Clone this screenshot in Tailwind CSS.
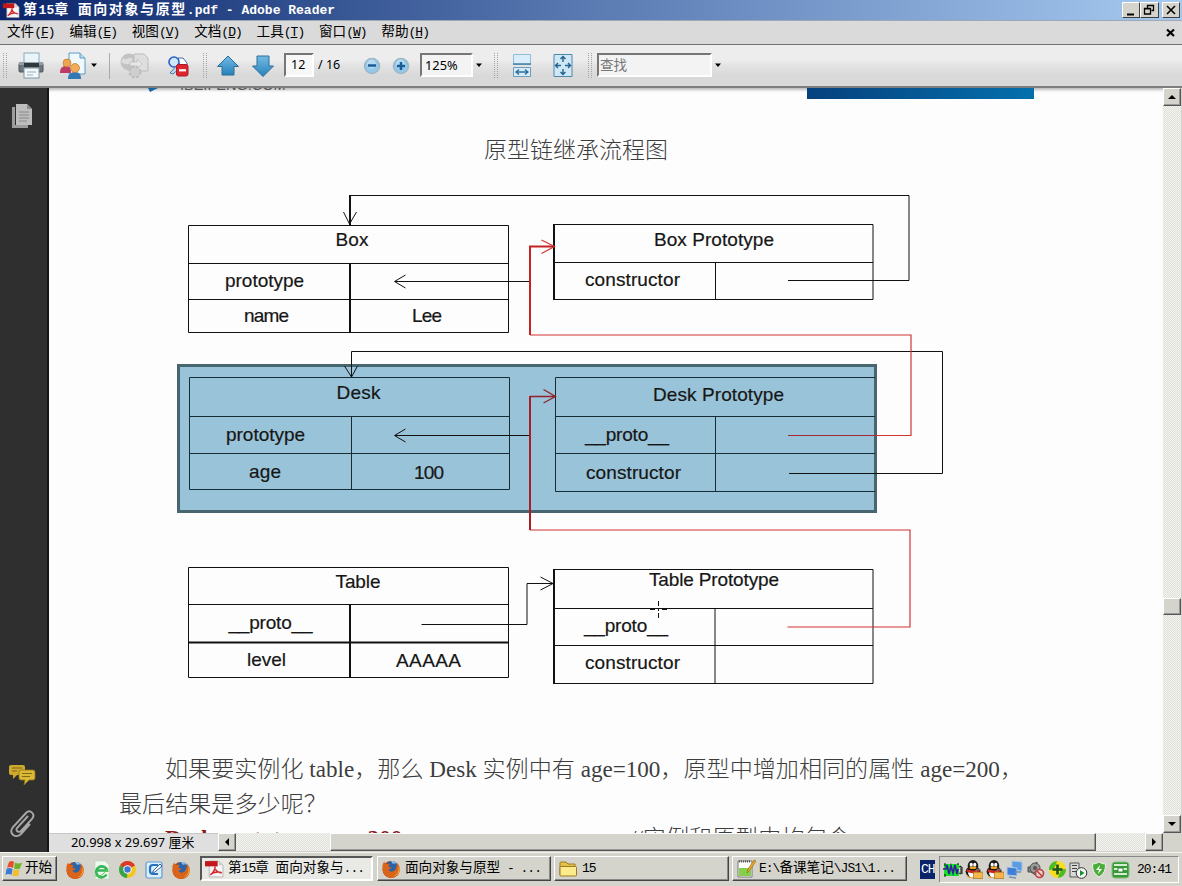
<!DOCTYPE html>
<html lang="zh-CN">
<head>
<meta charset="utf-8">
<title>第15章 面向对象与原型.pdf - Adobe Reader</title>
<script src="https://cdn.jsdelivr.net/npm/@tailwindcss/browser@4"></script>
</head>
<body class="w-[1182px] h-[886px] overflow-hidden flex flex-col bg-[#d4d4cc] font-['Liberation_Mono','Noto_Sans_CJK_SC',monospace] text-black">

<!-- shared symbols and patterns -->
<svg class="absolute w-0 h-0">
  <symbol id="pdf" viewBox="0 0 18 17"><path d="M4 1h9l4 4v11H4z" fill="#f6f6f6" stroke="#999" stroke-width=".6"/><path d="M13 1l4 4h-4z" fill="#ccc"/><path d="M0 1h12v5H0z" fill="#c3171c"/><path d="M5 14c3-2 5-6 4.500-8M9 7c1 3 3 5 7 5M6 13c3-2 6-2 9-1.500" fill="none" stroke="#d3262b" stroke-width="1.400"/></symbol>
  <symbol id="ff" viewBox="0 0 20 20"><circle cx="10" cy="10.500" r="8.500" fill="#b8400c"/><circle cx="11" cy="8" r="6" fill="#2a63a8"/><path d="M10 2c3-.5 5 1 6 3-2-1-3-1-4 0z" fill="#8cc4ee"/><path d="M1.500 9C1 6 2 4 3.500 2.500c0 1.500.5 2 1.500 2.500 1.500-.4 3 0 4 1-1 .2-1.500 1-1.500 2 1 .4 2 .5 3 .3-.5 2-2 2-3 2.200 1 2.500 4 3 6.500.5C16 8 16 6 15.500 3.500 18.500 6 19.500 9 18.500 13c-1 3.500-4.500 6-8.500 6S1.500 15 1.500 9z" fill="#d9641a"/><path d="M17 6c1.500 4 .5 9-4 11 3.500-.5 6-4 5.500-7.500z" fill="#fbb437"/></symbol>
  <symbol id="qq" viewBox="0 0 18 18"><path d="M3 15c0 3 4 2 6 2s5 1 5-2z" fill="#f5a21c"/><ellipse cx="8.500" cy="11" rx="7" ry="5.500" fill="#1b1b1b"/><ellipse cx="8" cy="12.500" rx="4" ry="4" fill="#fff"/><ellipse cx="8.500" cy="5.500" rx="5" ry="5.500" fill="#1b1b1b"/><ellipse cx="6.800" cy="4.500" rx="1.500" ry="1.900" fill="#fff"/><ellipse cx="10.200" cy="4.500" rx="1.500" ry="1.900" fill="#fff"/><ellipse cx="8.500" cy="7.300" rx="3.300" ry="1.200" fill="#f5a21c"/><path d="M2.500 8.500q6 3 12 0v2.500q-6 3-12 0z" fill="#d3281c"/><path d="M11.500 12v-1.500a2 2 0 0 1 4 0V12" fill="none" stroke="#777" stroke-width="1"/><rect x="9" y="11.500" width="9" height="6" fill="#f7b64c" stroke="#a06a14" stroke-width=".6"/></symbol>
  <pattern id="dither" width="2" height="2" patternUnits="userSpaceOnUse"><rect width="2" height="2" fill="#f4f4f1"/><rect width="1" height="1" fill="#dfdfda"/><rect x="1" y="1" width="1" height="1" fill="#dfdfda"/></pattern>
</svg>

<!-- title bar -->
<header class="h-[21px] shrink-0 flex items-center bg-linear-to-r from-[#0b246a] via-[#5777b0] via-48% to-[#a6caf0] border-b border-[#9fa8b5]">
  <svg class="w-[17px] h-[17px] ml-[3px] mr-[3px]"><use href="#pdf"/></svg>
  <h1 class="text-white font-bold text-[13px] leading-[20px] whitespace-pre grow"><span class="text-[14px] tracking-[1.600px]">第</span>15<span class="text-[14px] tracking-[1.600px]">章</span> <span class="text-[14px] tracking-[1.600px]">面向对象与原型</span>.pdf - Adobe Reader</h1>
  <div class="flex mr-[2px]">
    <div class="w-[18px] h-[16px] bg-[#d4d4cc] border border-t-white border-l-white border-r-[#404040] border-b-[#404040]"><svg class="w-4 h-3.5"><path d="M4 10.500h7v2H4z"/></svg></div>
    <div class="w-[19px] h-[16px] bg-[#d4d4cc] border border-t-white border-l-white border-r-[#404040] border-b-[#404040]"><svg class="w-4 h-3.5"><path d="M6.500 5V2.500h6v5h-2M3.500 5.500h6v5.500h-6z M6 2.500h7M3 5.800h7" fill="none" stroke="#000" stroke-width="1.300"/></svg></div>
    <div class="ml-[3px] w-[18px] h-[16px] bg-[#d4d4cc] border border-t-white border-l-white border-r-[#404040] border-b-[#404040]"><svg class="w-4 h-3.5"><path d="M4 3l8 8M12 3l-8 8" stroke="#000" stroke-width="1.600"/></svg></div>
  </div>
</header>

<!-- menu bar -->
<nav class="h-[24px] shrink-0 flex items-center bg-[#dadada] border-b border-[#737373] pl-[7px] text-[13px] tracking-[-1px] leading-[22px] whitespace-pre">
  <span class="w-[62.400px]"><span class="text-[13.600px] tracking-[0px]">文件</span>(<u>F</u>)</span>
  <span class="w-[62.400px]"><span class="text-[13.600px] tracking-[0px]">编辑</span>(<u>E</u>)</span>
  <span class="w-[62.400px]"><span class="text-[13.600px] tracking-[0px]">视图</span>(<u>V</u>)</span>
  <span class="w-[62.400px]"><span class="text-[13.600px] tracking-[0px]">文档</span>(<u>D</u>)</span>
  <span class="w-[62.400px]"><span class="text-[13.600px] tracking-[0px]">工具</span>(<u>T</u>)</span>
  <span class="w-[62.400px]"><span class="text-[13.600px] tracking-[0px]">窗口</span>(<u>W</u>)</span>
  <span class="grow"><span class="text-[13.600px] tracking-[0px]">帮助</span>(<u>H</u>)</span>
  <svg class="w-[9px] h-[9px] mr-[7px]"><path d="M1 1.500l7 6.500M8 1.500l-7 6.500" stroke="#000" stroke-width="2.200"/></svg>
</nav>

<!-- toolbar -->
<div class="h-[43px] shrink-0 bg-linear-to-b from-[#ededed] from-36% via-[#e3e3e3] via-50% to-[#d9d9d9] to-75% border-b-2 border-[#7d7d7d] flex items-center pl-[3px] font-['Noto_Sans','Noto_Sans_CJK_SC',sans-serif]">
  <div class="w-[4px] h-[25px] border-x border-dotted border-[#a5a5a5]"></div>
  <svg class="w-[28px] h-[28px] ml-[10px]" viewBox="0 0 28 28"><rect x="7" y="1" width="15" height="11" fill="#eaf5fa" stroke="#8caab9"/><rect x="2" y="11" width="24" height="9" rx="1" fill="#6d777b" stroke="#4b5458"/><path d="M7 11h15v4H7z" fill="#30383c"/><path d="M2 10h5v3H2zM22 10h4v3h-4z" fill="#93a0a5"/><rect x="7" y="16" width="15" height="10" fill="#f2f9fc" stroke="#7d97a4"/><path d="M10 20h9M10 23h6" stroke="#99aab3"/></svg>
  <svg class="w-[28px] h-[28px] ml-[14px]" viewBox="0 0 28 28"><path d="M10 1h11l5 5v16H10z" fill="#eef8fd" stroke="#5c9cc6"/><path d="M21 1v5h5" fill="#b9dbee" stroke="#5c9cc6"/><path d="M1 21c0-5 2-7 6-7s5 2 5 7z" fill="#bd3b66"/><circle cx="8" cy="11" r="4" fill="#eda453" stroke="#c17a2d" stroke-width=".7"/><path d="M9 27c0-5 3-7 7-7s6 2 6 7z" fill="#3278b2"/><circle cx="16" cy="16" r="4.500" fill="#f0ac5c" stroke="#c17a2d" stroke-width=".7"/></svg>
  <svg class="w-[8px] h-[5px] ml-[3px]"><path d="M1 .5h6L4 4z"/></svg>
  <div class="w-px h-[26px] bg-[#aaa] ml-[11px]"></div>
  <svg class="w-[31px] h-[28px] ml-[10px]" viewBox="0 0 31 28"><circle cx="9" cy="10" r="8.500" fill="#c2c2c2"/><path d="M3 6c4 3 5-1 8 0s1 5-2 6-6-1-8-2z" fill="#ddd"/><path d="M14 2h10l4 4v13H14z" fill="#dedede" stroke="#bcbcbc"/><path d="M10 10h7V7l5 5-5 5v-3h-7z" fill="#e6e6e6" stroke="#b5b5b5" stroke-width=".6"/><circle cx="15" cy="20" r="5" fill="#c9c9c9" stroke="#bcbcbc" stroke-width="3" stroke-dasharray="2.500 1.500"/><circle cx="15" cy="20" r="4.500" fill="#cfcfcf"/></svg>
  <svg class="w-[22px] h-[22px] ml-[16px]" viewBox="0 0 22 22"><path d="M11 3h5l4 5v9h-8z" fill="#fff" stroke="#446fa8"/><circle cx="7" cy="7" r="5" fill="#cfe6fb" stroke="#285fc1" stroke-width="1.600"/><path d="M3 18l9-10 3 3-9 8z" fill="#b9d7ee" stroke="#31629e" stroke-width=".8"/><rect x="9.500" y="9.500" width="11.500" height="11.500" rx="2" fill="#dc2630" stroke="#b31620"/><path d="M12 15.300h7" stroke="#fff" stroke-width="2.200"/></svg>
  <div class="w-[4px] h-[25px] border-x border-dotted border-[#a5a5a5] ml-[14px]"></div>
  <svg class="w-[24px] h-[24px] ml-[9px]" viewBox="0 0 24 24"><defs><linearGradient id="ab" x2="0" y2="1"><stop stop-color="#74bbe6"/><stop offset="1" stop-color="#2581b9"/></linearGradient></defs><path d="M12 2L1.500 12.500H6V21h12v-8.500h4.500z" fill="url(#ab)" stroke="#2c6c98"/></svg>
  <svg class="w-[24px] h-[24px] ml-[11px]" viewBox="0 0 24 24"><path d="M12 22.500L1.500 12H6V2h12v10h4.500z" fill="url(#ab)" stroke="#2c6c98"/></svg>
  <div class="w-[30px] h-[24px] ml-[9px] bg-[#f7f7f7] border-2 border-t-[#767676] border-l-[#767676] border-r-white border-b-white text-[12.500px] leading-[20px] pl-[5px] -mt-px">12</div>
  <span class="text-[12.500px] ml-[4px] whitespace-pre w-[33px]">/ 16</span>
  <svg class="w-[18px] h-[18px] ml-[12px]" viewBox="0 0 18 18"><circle cx="9" cy="9" r="7.500" fill="#94c9e9" stroke="#9fb7c6" stroke-width="1.500"/><circle cx="8.500" cy="7" r="4.500" fill="#b3dbf2"/><path d="M5 8.500h8" stroke="#1a5c96" stroke-width="2.500"/></svg>
  <svg class="w-[18px] h-[18px] ml-[11px]" viewBox="0 0 18 18"><circle cx="9" cy="9" r="7.500" fill="#94c9e9" stroke="#9fb7c6" stroke-width="1.500"/><circle cx="8.500" cy="7" r="4.500" fill="#b3dbf2"/><path d="M5 9h8M9 5v8" stroke="#1a5c96" stroke-width="2.500"/></svg>
  <div class="w-[53px] h-[24px] ml-[10px] bg-[#f3f3f3] border-2 border-t-[#767676] border-l-[#767676] border-r-white border-b-white text-[12.800px] leading-[20px] pl-[3px] -mt-px">125%</div>
  <svg class="w-[8px] h-[5px] ml-[2px]"><path d="M1 .5h6L4 4z"/></svg>
  <div class="w-[4px] h-[25px] border-x border-dotted border-[#a5a5a5] ml-[11px]"></div>
  <svg class="w-[20px] h-[25px] ml-[14px]" viewBox="0 0 20 25"><path d="M1.500 1.500h17v10h-17z" fill="#d9eefa" stroke="#8ebdd8"/><path d="M1 11h18" stroke="#3f7fa5" stroke-width="1.500"/><path d="M1.500 14.500h17v9h-17z" fill="#d5ebf7" stroke="#6d9dbb"/><path d="M4 19h12M7 16.500L4 19l3 2.500M13 16.500l3 2.500-3 2.500" fill="none" stroke="#2c6e9c" stroke-width="1.300"/></svg>
  <svg class="w-[20px] h-[25px] ml-[21px]" viewBox="0 0 20 25"><path d="M1 1.500h18v22H1z" fill="#cfe8f6" stroke="#4e87ac"/><path d="M10 3.500V9M7.500 6L10 3.500 12.500 6M10 21.500V16M7.500 19l2.500 2.500 2.500-2.500M2.500 12.500H8M5 10l-2.500 2.500L5 15M17.500 12.500H12M15 10l2.500 2.500L15 15" fill="none" stroke="#22638f" stroke-width="1.400"/></svg>
  <div class="w-[4px] h-[25px] border-x border-dotted border-[#a5a5a5] ml-[15px]"></div>
  <div class="w-[115px] h-[24px] ml-[5px] bg-[#f3f3f3] border-2 border-t-[#767676] border-l-[#767676] border-r-white border-b-white text-[13.600px] leading-[20px] pl-[1px] text-[#777] -mt-px">查找</div>
  <svg class="w-[8px] h-[5px] ml-[2px]"><path d="M1 .5h6L4 4z"/></svg>
</div>

<!-- work area -->
<main class="h-[764px] shrink-0 flex">
  <aside class="w-[49px] shrink-0 bg-[#2f2f2f] border-r-2 border-r-[#161616] flex flex-col items-center pr-[3px]">
    <svg class="w-[22px] h-[26px] mt-[15px]" viewBox="0 0 22 26"><path d="M1 4h3v18h13v3H1z" fill="#9c9c9c"/><path d="M5 1h11l5 5v16H5z" fill="#bdbdbd"/><path d="M16 1v5h5" fill="#8c8c8c"/><path d="M8 9h10M8 12h10M8 15h10M8 18h8" stroke="#8a8a8a"/></svg>
    <div class="grow"></div>
    <svg class="w-[28px] h-[22px]" viewBox="0 0 28 22"><path d="M3 1h12q2 0 2 2v6q0 2-2 2H9l-4 4v-4H3q-2 0-2-2V3q0-2 2-2z" fill="#cdaa2b"/><path d="M13 6h12q2 0 2 2v6q0 2-2 2h-4l-5 5 1-5h-4q-2 0-2-2V8q0-2 2-2z" fill="#dcb935" stroke="#8d741b" stroke-width=".8"/><path d="M4 4h10M4 7h5M14 9.500h10M14 12.500h8" stroke="#7f6817" stroke-width="1.200"/></svg>
    <svg class="w-[26px] h-[28px] mt-[24px] mb-[14px]" viewBox="0 0 26 28"><path d="M19 6L8 18c-2 3 2 5 4 3L23 9c4-5-2-10-6-6L4 17c-5 7 3 12 8 7l9-10" fill="none" stroke="#a9a9a9" stroke-width="1.900"/></svg>
  </aside>

  <section class="w-[1114px] shrink-0 flex flex-col">
    <!-- page -->
    <article class="h-[745px] shrink-0 overflow-hidden bg-[#fdfdfd] flex flex-col text-[#3d3d3d] font-['Liberation_Serif','Noto_Sans_CJK_SC',serif] shadow-[inset_0_4px_3px_-2px_#bbb]">
      <div class="h-[11px] shrink-0 flex items-start pl-[99px] overflow-hidden">
        <svg class="w-[11px] h-[5px] shrink-0"><path d="M0 0h10L2 4z" fill="#1866a0"/></svg>
        <div class="w-[648px] h-[5px] shrink-0 pl-[21px] overflow-hidden"><p class="-mt-[11px] text-[14.500px] leading-[16px] font-['Liberation_Sans',sans-serif] text-[#555]">IBEIFENG.COM</p></div>
        <div class="w-[227px] h-[11px] bg-linear-to-r from-[#06417d] to-[#0470ad]"></div>
      </div>
      <h2 class="mt-[34px] h-[36px] shrink-0 pl-[435px] text-[23px] leading-[36px] font-light">原型链继承流程图</h2>
      <svg class="mt-[11px] w-[1114px] h-[520px] shrink-0" viewBox="49 180 1114 520" font-family="Liberation Sans, sans-serif" font-size="19" fill="none" stroke="#111">
        <!-- highlighted Desk group -->
        <rect x="178.500" y="365.500" width="697" height="146" fill="#99c3d8" stroke="#48666f" stroke-width="3"/>
        <!-- Box -->
        <path d="M188.500 225.500h320v107h-320zM188.500 263.500h320M188.500 299.500h320"/><path d="M350 263v70" stroke-width="2"/>
        <path d="M554.500 224.500h318.500v75H554.500zM554 262.500h319M715.500 262.500v37"/><path d="M554 224v76" stroke-width="2"/>
        <path d="M350.500 195.500h558.500v85h-121"/><path d="M350 195v30" stroke-width="2"/><path d="M343.500 212l6 12 7-12"/>
        <path d="M530 281.500H395M405.500 275l-11 6.500 11 6.500"/>
        <!-- Desk -->
        <path d="M189.500 377.500h320v112h-320zM189.500 416.500h320M189.500 453.500h320M351.500 416.500v73M875 377.500H555.500v114H875M555.500 416.500H875M555.500 453.500H875M715.500 416.500v75" stroke="#152c35"/>
        <path d="M351.500 377v-25.500h591v122H789M344.500 366l7 11 6-11"/>
        <path d="M530 435.500H395M405.500 429l-11 6.500 11 6.500"/>
        <!-- Table -->
        <path d="M188.500 567.500h320v110h-320zM188.500 604.500h320"/><path d="M188 642.500h321M350 604v74" stroke-width="2"/>
        <path d="M554.500 569.500h318.500v114H554.500zM554 608.500h319M554 645.500h319M715 608.500v75"/><path d="M554 569v115" stroke-width="2"/>
        <path d="M421.500 624.500h105.500v-41h26M540.500 577l12.500 6.500-12.500 6.500"/>
        <!-- inheritance links -->
        <g stroke="#cf3535" stroke-width="1.200"><path d="M530 335h381v100.500H875M530 530h380v97H787.500"/><path d="M541.500 240l13 6.500-13 7"/><path d="M876 435.500H788" stroke="#a52a35"/></g>
        <path d="M530 335v-88.500h23.500" stroke="#c52222" stroke-width="2"/>
        <path d="M530 530V396" stroke="#a91d24" stroke-width="2"/><path d="M530 396.500h25M543.500 389.500l12 7-12 6.500" stroke="#94222b" stroke-width="1.300"/>
        <!-- mouse cursor -->
        <path d="M658.500 601v5M658.500 608v3M658.500 613v5M650 609.500h5M662 609.500h5"/>
        <g fill="#161616" stroke="#161616" stroke-width=".2">
          <text x="335.500" y="246" textLength="33">Box</text><text x="225" y="287" textLength="79">prototype</text><text x="244" y="322" textLength="45">name</text><text x="412" y="322" textLength="30">Lee</text>
          <text x="654" y="246" textLength="120">Box Prototype</text><text x="585" y="286" textLength="95">constructor</text>
          <text x="336.500" y="399" textLength="44">Desk</text><text x="226" y="441" textLength="79">prototype</text><text x="249" y="478" textLength="32">age</text><text x="414" y="479" textLength="30">100</text>
          <text x="653" y="401" textLength="131">Desk Prototype</text><text x="585" y="441" textLength="84">__proto__</text><text x="586" y="479" textLength="95">constructor</text>
          <text x="335.500" y="588" textLength="45">Table</text><text x="228.500" y="629" textLength="84">__proto__</text><text x="247" y="666" textLength="39">level</text><text x="396" y="667" textLength="65">AAAAA</text>
          <text x="649" y="586" textLength="130">Table Prototype</text><text x="584" y="632" textLength="84">__proto__</text><text x="585" y="669" textLength="95">constructor</text>
        </g>
      </svg>
      <div class="mt-[52px] pl-[70px] shrink-0 text-[23.100px] leading-[34.500px] whitespace-nowrap font-light">
        <p class="h-[34.500px] pl-[46px]">如果要实例化 table，那么 Desk 实例中有 age=100，原型中增加相同的属性 age=200，</p>
        <p class="h-[34.500px]">最后结果是多少呢？</p>
        <p class="h-[34.500px] pl-[46px] flex"><span class="w-[465px] font-bold text-[#8b1a1a]">Desk.prototype.age=200;</span><span>//实例和原型中均包含</span></p>
      </div>
    </article>
    <!-- horizontal scroll bar -->
    <div class="h-[19px] shrink-0 flex bg-[#d4d4cc]">
      <div class="w-[169px] bg-[#dfdfdf] border-t border-[#c8c8c8] pl-[22px] text-[12.900px] leading-[17px] font-['Noto_Sans','Noto_Sans_CJK_SC',sans-serif] whitespace-nowrap">20.998 x 29.697 厘米</div>
      <div class="w-[18px] h-[18px] border border-t-white border-l-white border-r-[#555] border-b-[#555] shadow-[inset_-1px_-1px_#999]"><svg class="w-4 h-4"><path d="M10 4v8L6 8z"/></svg></div>
      <svg class="w-[94px] h-[18px]"><rect width="94" height="18" fill="url(#dither)"/></svg>
      <div class="w-[766px] h-[18px] border border-t-white border-l-white border-r-[#555] border-b-[#555] shadow-[inset_-1px_-1px_#999]"></div>
      <svg class="w-[49px] h-[18px]"><rect width="49" height="18" fill="url(#dither)"/></svg>
      <div class="w-[18px] h-[18px] border border-t-white border-l-white border-r-[#555] border-b-[#555] shadow-[inset_-1px_-1px_#999]"><svg class="w-4 h-4"><path d="M6 4v8l4-4z"/></svg></div>
    </div>
  </section>

  <!-- vertical scroll bar -->
  <div class="w-[19px] flex flex-col pr-px bg-[#d4d4cc]">
    <div class="h-[18px] border border-t-white border-l-white border-r-[#555] border-b-[#555] shadow-[inset_-1px_-1px_#999]"><svg class="w-4 h-4"><path d="M4 10h8L8 6z"/></svg></div>
    <svg class="w-[18px] h-[492px]"><rect width="18" height="492" fill="url(#dither)"/></svg>
    <div class="h-[17px] border border-t-white border-l-white border-r-[#555] border-b-[#555] shadow-[inset_-1px_-1px_#999]"></div>
    <svg class="w-[18px] h-[200px]"><rect width="18" height="200" fill="url(#dither)"/></svg>
    <div class="h-[18px] border border-t-white border-l-white border-r-[#555] border-b-[#555] shadow-[inset_-1px_-1px_#999]"><svg class="w-4 h-4"><path d="M4 6h8l-4 4z"/></svg></div>
  </div>
</main>

<!-- taskbar -->
<footer class="h-[34px] shrink-0 flex items-start pt-[3px] pl-[2px] border-t border-[#f4f4f0] bg-[#d4d4cc] text-[13px] tracking-[-1px] leading-[20px] whitespace-pre">
  <div class="w-[55px] h-[25px] flex items-center border border-t-white border-l-white border-r-[#444] border-b-[#444] shadow-[inset_-1px_-1px_#888]">
    <svg class="w-[18px] h-[17px] ml-[2px]" viewBox="0 0 18 17"><path d="M4 2q3-2 5 0L8 8q-3-2-6 0z" fill="#e5502a"/><path d="M10 2.500q3 2 7 0l-2 6q-3 1.500-6 0z" fill="#73b32c"/><path d="M1.500 9q3-2 6 0l-1 6q-3-2-6 0z" fill="#3a7bd5"/><path d="M8.500 9.500q3 1.500 6 0l-1 6q-3 1.500-6 0z" fill="#f5bd2b"/></svg>
    <span class="text-[13.600px] tracking-[0px] ml-[2px]">开始</span>
  </div>
  <div class="flex items-center h-[27px] pl-[8px] gap-[7px]">
    <svg class="w-[20px] h-[20px]"><use href="#ff"/></svg>
    <svg class="w-[19px] h-[20px]" viewBox="0 0 19 20"><path d="M3 1h10l4 4v14H3z" fill="#eff8ef" stroke="#b9d4b9" stroke-width=".6"/><path d="M14.500 14.500a5.500 5.500 0 1 1 .5-4H5" fill="none" stroke="#35b657" stroke-width="2.600"/><path d="M3 16q7 2 13-8" stroke="#57cb4a" fill="none"/></svg>
    <svg class="w-[19px] h-[19px]" viewBox="0 0 19 19"><circle cx="9.500" cy="9.500" r="8.500" fill="#f4c61c"/><path d="M9.500 9.500L2 5.500A8.500 8.500 0 0 1 17 5.500z" fill="#d93a2b"/><path d="M9.500 9.500L2 5.500A8.500 8.500 0 0 0 9 18z" fill="#36a34b"/><circle cx="9.500" cy="9.500" r="4.200" fill="#fff"/><circle cx="9.500" cy="9.500" r="3.200" fill="#3c79d3"/></svg>
    <svg class="w-[20px] h-[20px]" viewBox="0 0 20 20"><rect x="2" y="2" width="16" height="16" rx="2" fill="#dceefc" stroke="#5f9bd0" stroke-width="1.200"/><path d="M14 5H9q-3 0-3 3v3q0 3 3 3h5" fill="none" stroke="#2773bd" stroke-width="2.200"/><path d="M9 11l7-7 2 2-7 6-2.500.5z" fill="#fff" stroke="#2c629b"/></svg>
    <svg class="w-[20px] h-[20px]"><use href="#ff"/></svg>
  </div>
  <div class="ml-[9px] w-[173px] h-[25px] flex items-center bg-[#e9e9e5] border-2 border-t-[#555] border-l-[#555] border-r-white border-b-white">
    <svg class="w-[19px] h-[18px] ml-[3px] mr-[4px]"><use href="#pdf"/></svg><span><span class="text-[13.600px] tracking-[0px]">第</span>15<span class="text-[13.600px] tracking-[0px]">章</span> <span class="text-[13.600px] tracking-[0px]">面向对象与</span>...</span>
  </div>
  <div class="ml-[4px] w-[174px] h-[25px] flex items-center border border-t-white border-l-white border-r-[#444] border-b-[#444] shadow-[inset_-1px_-1px_#888]">
    <svg class="w-[20px] h-[20px] ml-[3px] mr-[4px]"><use href="#ff"/></svg><span><span class="text-[13.600px] tracking-[0px]">面向对象与原型</span> - ...</span>
  </div>
  <div class="ml-[3px] w-[175px] h-[25px] flex items-center border border-t-white border-l-white border-r-[#444] border-b-[#444] shadow-[inset_-1px_-1px_#888]">
    <svg class="w-[19px] h-[16px] ml-[4px] mr-[4px]" viewBox="0 0 19 16"><path d="M1 14V2q0-1 1-1h5l2 2h7v4" fill="#e4c24a" stroke="#9b7b1c"/><path d="M1 14V6.500q0-1 1-1h14.500q1 0 1 1V14q0 1-1 1H2q-1 0-1-1z" fill="#fdeb8e" stroke="#9b7b1c"/></svg><span>15</span>
  </div>
  <div class="ml-[3px] w-[175px] h-[25px] flex items-center border border-t-white border-l-white border-r-[#444] border-b-[#444] shadow-[inset_-1px_-1px_#888]">
    <svg class="w-[20px] h-[19px] ml-[3px] mr-[3px]" viewBox="0 0 20 19"><path d="M2 2h14v16H2z" fill="#fff" stroke="#777"/><path d="M3 9h12v8H3z" fill="#84d04a"/><path d="M3 2.500h12" stroke="#555" stroke-width="2" stroke-dasharray="1 1"/><path d="M11 14l1-4 6-9 2 1-6 9z" fill="#ecab25" stroke="#8d5e12" stroke-width=".6"/></svg><span>E:\<span class="text-[13.600px] tracking-[0px]">备课笔记</span>\JS1\1...</span>
  </div>
  <div class="ml-[13px] mt-[4px] w-[15px] h-[19px] bg-[#0a246a] text-white leading-[19px] overflow-hidden pl-px">CH</div>
  <div class="ml-[4px] w-[240px] h-[27px] flex items-center border border-t-[#888] border-l-[#888] border-r-white border-b-white pl-[3px]">
    <svg class="w-[20px] h-[14px]" viewBox="0 0 20 14"><path d="M1 1h15v12H1z" fill="#18df28"/><path d="M0 6h3l1-4 2 9 2-8 2 7 2-8 2 9 1-5" fill="none" stroke="#30209a" stroke-width="1.700"/><path d="M2 0v3M2 11v3M14 1h2M16 4l2-1v8l-2-1M19 4v7" stroke="#111" fill="none"/></svg>
    <svg class="w-[19px] h-[19px] ml-px"><use href="#qq"/></svg>
    <svg class="w-[19px] h-[19px] ml-[2px]"><use href="#qq"/></svg>
    <svg class="w-[18px] h-[19px] ml-[2px]" viewBox="0 0 18 19"><path d="M6 1l10 1v9l-10-1z" fill="#5b9be4" stroke="#aac4e0"/><path d="M1 7l10 1v8L1 15z" fill="#3c7fda" stroke="#b7cbe3"/><path d="M3 17l7 1M9 12h6" stroke="#7890a8" stroke-width="1.500"/></svg>
    <svg class="w-[18px] h-[18px] ml-[3px]" viewBox="0 0 18 18"><path d="M1 6h3l6-5v14l-6-4H1z" fill="#888" stroke="#4a4a4a"/><circle cx="8" cy="7" r="5" fill="#999" stroke="#555"/><circle cx="8" cy="7" r="2" fill="#555"/><circle cx="12.500" cy="12.500" r="4" fill="#e9d4d4" stroke="#bd3c3c" stroke-width="1.600"/><path d="M10 10l5 5" stroke="#bd3c3c" stroke-width="1.500"/></svg>
    <svg class="w-[19px] h-[19px] ml-[3px]" viewBox="0 0 19 19"><circle cx="9.500" cy="9.500" r="8.500" fill="#f5dd21"/><path d="M9 1a8.500 8.500 0 0 0-8 9q6 1 8-9zM10 18a8.500 8.500 0 0 0 8-9q-6-1-8 9z" fill="#4fba28"/><path d="M4.500 9.500h10M9.500 4.500v10" stroke="#16551c" stroke-width="2.600"/></svg>
    <svg class="w-[19px] h-[18px] ml-[2px]" viewBox="0 0 19 18"><path d="M1 2h9v14H1z" fill="#d9d9d9" stroke="#555"/><path d="M3 4.500h5M3 7.500h5M3 10.500h4" stroke="#444"/><circle cx="12.500" cy="12" r="5.300" fill="#f6f6f6" stroke="#333"/><path d="M11 9l4.500 3-4.500 3z" fill="#189331"/></svg>
    <svg class="w-[16px] h-[17px] ml-[3px]" viewBox="0 0 16 17"><path d="M8 1q3 2 6.500 2 .5 9-6.500 13Q1 12 1.500 3 5 3 8 1z" fill="#4bac3a" stroke="#e9f4e4"/><path d="M9 4l-4 5h3l-1 4 4-5H8z" fill="#fff"/></svg>
    <svg class="w-[19px] h-[18px] ml-[4px]" viewBox="0 0 19 18"><rect x="1" y="1" width="17" height="16" rx="3" fill="#3a9a37" stroke="#84be7e"/><path d="M3 4h13M3 8h13M3 13h13" stroke="#d7edd3" stroke-width="2"/><rect x="7" y="7" width="5" height="4" fill="#fff" stroke="#358a34"/></svg>
    <time class="ml-[7px]">20:41</time>
  </div>
</footer>
</body>
</html>
